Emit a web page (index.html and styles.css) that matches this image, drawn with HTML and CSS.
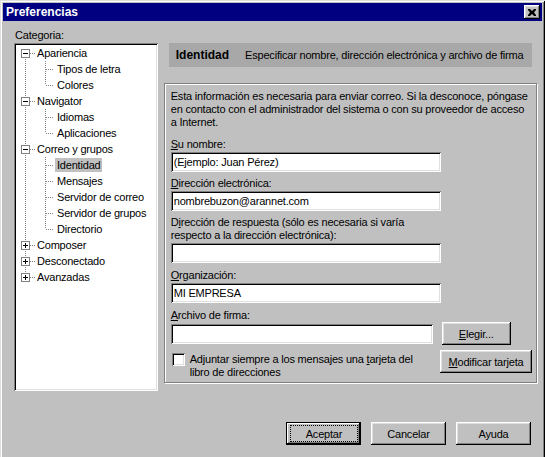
FILE: index.html
```html
<!DOCTYPE html>
<html lang="es">
<head>
  <meta charset="UTF-8">
  <title>Preferencias</title>
  <link rel="stylesheet" href="styles.css">
</head>
<body>
  <div class="window">
    <div class="titlebar">
      <span class="title">Preferencias</span>
      <button class="close" aria-label="Cerrar">
        <svg width="8" height="7" viewBox="0 0 8 7"><path d="M0 0h2l2 2 2-2h2v1l-2 2.5 2 2.5v1h-2l-2-2-2 2h-2v-1l2-2.5-2-2.5z" fill="#000"/></svg>
      </button>
    </div>

    <div class="body">
      <div class="panes">
        <div class="sidebar">
          <div class="cat-label">Categoria:</div>
          <div class="tree">
            <div class="roots">
              <div class="row root"><i class="exp open"></i><span>Apariencia</span></div>
              <div class="children">
                <div class="row child"><span>Tipos de letra</span></div>
                <div class="row child"><span>Colores</span></div>
              </div>
              <div class="row root"><i class="exp open"></i><span>Navigator</span></div>
              <div class="children">
                <div class="row child"><span>Idiomas</span></div>
                <div class="row child"><span>Aplicaciones</span></div>
              </div>
              <div class="row root"><i class="exp open"></i><span>Correo y grupos</span></div>
              <div class="children">
                <div class="row child sel"><span>Identidad</span></div>
                <div class="row child"><span>Mensajes</span></div>
                <div class="row child"><span>Servidor de correo</span></div>
                <div class="row child"><span>Servidor de grupos</span></div>
                <div class="row child"><span>Directorio</span></div>
              </div>
              <div class="row root"><i class="exp"></i><span>Composer</span></div>
              <div class="row root"><i class="exp"></i><span>Desconectado</span></div>
              <div class="row root"><i class="exp"></i><span>Avanzadas</span></div>
            </div>
          </div>
        </div>

        <div class="main">
          <div class="header">
            <b>Identidad</b>
            <span>Especificar nombre, dirección electrónica y archivo de firma</span>
          </div>

          <div class="group">
            <p class="intro">Esta información es necesaria para enviar correo. Si la desconoce, póngase<br>en contacto con el administrador del sistema o con su proveedor de acceso<br>a Internet.</p>

            <label class="field-label first"><u>S</u>u nombre:</label>
            <input class="field" type="text" value="(Ejemplo: Juan Pérez)">

            <label class="field-label"><u>D</u>irección electrónica:</label>
            <input class="field" type="text" value="nombrebuzon@arannet.com">

            <label class="field-label">D<u>i</u>rección de respuesta (sólo es necesaria si varía<br>respecto a la dirección electrónica):</label>
            <input class="field" type="text" value="">

            <label class="field-label wider"><u>O</u>rganización:</label>
            <input class="field" type="text" value="MI EMPRESA">

            <label class="field-label wider"><u>A</u>rchivo de firma:</label>
            <div class="firma-row">
              <input class="field short" type="text" value="">
              <button class="btn small"><u>E</u>legir...</button>
            </div>

            <div class="check-row">
              <span class="checkbox"></span>
              <span class="check-text">Adjuntar siempre a los mensajes una <u>t</u>arjeta del<br>libro de direcciones</span>
              <button class="btn wide"><u>M</u>odificar tarjeta</button>
            </div>
          </div>
        </div>
      </div>

      <div class="footer">
        <button class="btn default"><span class="focus">Aceptar</span></button>
        <button class="btn">Cancelar</button>
        <button class="btn">Ayuda</button>
      </div>
    </div>
  </div>
</body>
</html>
```

FILE: styles.css
```css
body {
  margin: 0;
  background: #c0c0c0;
  font-family: "Liberation Sans", Arial, sans-serif;
  font-size: 11px;
  letter-spacing: -0.2px;
  color: #000;
}

.window {
  width: 545px;
  height: 470px;
  box-sizing: border-box;
  padding: 3px;
  background: #c0c0c0;
  box-shadow: inset 1px 1px #dfdfdf, inset -1px -1px #000,
              inset 2px 2px #fff, inset -2px -2px #808080;
}

/* title bar */
.titlebar {
  height: 18px;
  background: #000080;
  color: #fff;
  display: flex;
  align-items: center;
  padding: 0 2px 0 3px;
}

.title {
  font-weight: bold;
  font-size: 12px;
  letter-spacing: 0;
}

.close {
  margin-left: auto;
  width: 16px;
  height: 14px;
  padding: 0;
  border: none;
  background: #c0c0c0;
  display: flex;
  align-items: center;
  justify-content: center;
  box-shadow: inset -1px -1px #000, inset 1px 1px #fff,
              inset -2px -2px #808080, inset 2px 2px #dfdfdf;
}

.body {
  padding: 8px 5px 0 11px;
}

.panes {
  display: flex;
  gap: 6px;
}

/* category tree */
.sidebar {
  width: 144px;
}

.cat-label {
  line-height: 13px;
  padding-left: 1px;
  margin-bottom: 1px;
}

.tree {
  height: 348px;
  box-sizing: border-box;
  padding: 2px;
  background: #fff;
  box-shadow: inset 1px 1px #808080, inset -1px -1px #fff,
              inset 2px 2px #000, inset -2px -2px #dfdfdf;
}

.roots {
  background: repeating-linear-gradient(#808080 0 1px, transparent 1px 2px) 9px 8px / 1px calc(100% - 16px) no-repeat;
}

.row {
  height: 16px;
  display: flex;
  align-items: center;
  white-space: nowrap;
}

.root {
  padding-left: 5px;
  background: repeating-linear-gradient(to right, #808080 0 1px, transparent 1px 2px) 14px 8px / 6px 1px no-repeat;
}

.root span {
  margin-left: 7px;
}

.exp {
  width: 9px;
  height: 9px;
  box-sizing: border-box;
  border: 1px solid #808080;
  background: linear-gradient(#000, #000) center / 5px 1px no-repeat,
              linear-gradient(#000, #000) center / 1px 5px no-repeat,
              #fff;
}

.exp.open {
  background: linear-gradient(#000, #000) center / 5px 1px no-repeat, #fff;
}

.children {
  background: repeating-linear-gradient(#808080 0 1px, transparent 1px 2px) 29px 0 / 1px calc(100% - 8px) no-repeat;
}

.child {
  padding-left: 39px;
  background: repeating-linear-gradient(to right, #808080 0 1px, transparent 1px 2px) 30px 8px / 8px 1px no-repeat;
}

.child span {
  padding: 0 2px;
  line-height: 14px;
}

.sel span {
  background: #c0c0c0;
}

/* right side */
.main {
  width: 374px;
  margin-top: 14px;
}

.header {
  margin: 0 5px;
  height: 24px;
  background: #a8a8a8;
  display: flex;
  align-items: center;
  padding-left: 7px;
  gap: 16px;
  white-space: nowrap;
}

.header b {
  font-size: 12px;
  letter-spacing: 0;
}

.group {
  margin-top: 16px;
  height: 300px;
  box-sizing: border-box;
  border: 1px solid #808080;
  box-shadow: inset 1px 1px #fff, 1px 1px #fff;
  padding: 6px 4px 0 6px;
}

.intro {
  margin: 0;
  line-height: 13px;
  white-space: nowrap;
}

.field-label {
  display: block;
  line-height: 13px;
  margin-top: 5px;
}

.field-label.first {
  margin-top: 9px;
}

.field-label.wider {
  margin-top: 6px;
}

.field {
  display: block;
  width: 270px;
  height: 20px;
  margin-top: 1px;
  box-sizing: border-box;
  border: none;
  padding: 0 3px;
  font: inherit;
  letter-spacing: inherit;
  color: #000;
  background: #fff;
  box-shadow: inset 1px 1px #808080, inset -1px -1px #fff,
              inset 2px 2px #000, inset -2px -2px #dfdfdf;
}

.firma-row {
  display: flex;
  align-items: center;
  gap: 9px;
}

.field.short {
  width: 262px;
  margin-top: 0;
}

.check-row {
  display: flex;
  align-items: flex-start;
  margin-top: 5px;
}

.checkbox {
  width: 13px;
  height: 13px;
  margin: 3px 0 0 1px;
  box-sizing: border-box;
  background: #fff;
  box-shadow: inset 1px 1px #808080, inset -1px -1px #fff,
              inset 2px 2px #000, inset -2px -2px #dfdfdf;
}

.check-text {
  margin: 3px 0 0 5px;
  line-height: 13px;
  flex: 1;
}

/* buttons */
.btn {
  width: 75px;
  height: 23px;
  padding: 0;
  border: none;
  background: #c0c0c0;
  font: inherit;
  letter-spacing: inherit;
  color: #000;
  box-shadow: inset -1px -1px #000, inset 1px 1px #fff,
              inset -2px -2px #808080, inset 2px 2px #dfdfdf;
}

.btn.small {
  width: 69px;
}

.btn.wide {
  width: 92px;
}

.btn.default {
  padding: 3px 3px 3px 4px;
  box-shadow: inset 0 0 0 1px #000, inset -2px -2px #000,
              inset 2px 2px #fff, inset -3px -3px #808080;
}

.focus {
  display: flex;
  align-items: center;
  justify-content: center;
  height: 100%;
  box-sizing: border-box;
  border: 1px dotted #000;
}

.footer {
  display: flex;
  justify-content: flex-end;
  gap: 10px;
  margin: 31px 6px 0 0;
}
```
